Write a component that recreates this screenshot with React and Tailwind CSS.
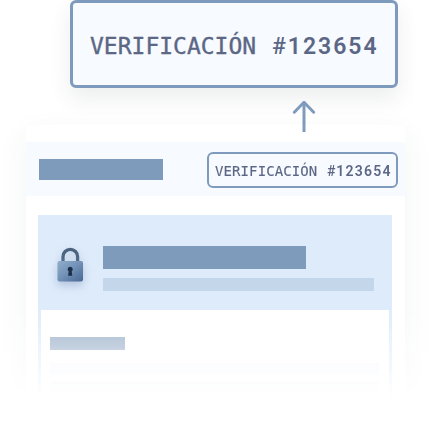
function Code({ large = false }) {
  return large ? (
    <span className="flex items-baseline whitespace-pre font-['DejaVu_Sans_Mono',monospace] text-[23px] leading-[30px] text-[#5c6785] [-webkit-text-stroke:0.35px_#5c6785]">
      VERIFICACIÓN{' '}
      <span className="ml-[2px] font-['Roboto',sans-serif] font-medium tracking-[1.9px] [-webkit-text-stroke:0px]">#</span>
      <span className="font-['Roboto',sans-serif] font-semibold tracking-[2px] [-webkit-text-stroke:0px]">123654</span>
    </span>
  ) : (
    <span className="flex items-baseline whitespace-pre font-['DejaVu_Sans_Mono',monospace] text-[14px] leading-5 tracking-[0.1px] text-[#5c6785] [-webkit-text-stroke:0.15px_#5c6785]">
      VERIFICACIÓN{' '}
      <span className="ml-[1px] font-['Roboto',sans-serif] font-medium tracking-[1px] [-webkit-text-stroke:0px]">#</span>
      <span className="font-['Roboto',sans-serif] font-semibold tracking-[1.25px] [-webkit-text-stroke:0px]">123654</span>
    </span>
  );
}

function Lock() {
  return (
    <svg width="34" height="42" viewBox="0 0 34 42" className="block overflow-visible drop-shadow-[0_4px_4px_rgba(70,95,140,0.28)]">
      <defs>
        <linearGradient id="body" x1="0" y1="0" x2="1" y2="1">
          <stop offset="0" stopColor="#91aecb" />
          <stop offset="0.5" stopColor="#7190b5" />
          <stop offset="1" stopColor="#476694" />
        </linearGradient>
        <linearGradient id="shackle" x1="0" y1="0" x2="0" y2="1">
          <stop offset="0" stopColor="#49627d" />
          <stop offset="1" stopColor="#526c8a" />
        </linearGradient>
      </defs>
      <path d="M6 18V12.7a7.3 7.3 0 0 1 14.6 0V18" fill="none" stroke="url(#shackle)" strokeWidth="3.3" />
      <rect x="0.5" y="17" width="25.5" height="20.5" rx="2" fill="url(#body)" />
      <path d="M13.2 22.8a2.6 2.6 0 0 1 1.5 4.7l.6 4.2h-4.2l.6-4.2a2.6 2.6 0 0 1 1.5-4.7z" fill="#1c2f48" />
    </svg>
  );
}

export default function App() {
  return (
    <div className="relative h-[443px] w-[433px] overflow-hidden bg-white">
      <div className="relative z-10 ml-[70px] flex h-[88px] w-[328px] items-center rounded-[6px] border-[3px] border-[#7e9bbd] bg-[#f7faff] pt-[4px] pl-[17px] shadow-[0_10px_22px_rgba(40,60,60,0.09)]">
        <Code large />
      </div>
      <div className="relative z-10 ml-[292px] pt-[12px]">
        <svg width="24" height="32" viewBox="0 0 24 32" fill="none" stroke="#7e9bbd" strokeWidth="3" strokeLinejoin="round" className="block">
          <path d="M12 32V2.5" />
          <path d="M2.3 12.2 12 2.3l9.7 9.9" strokeLinecap="round" />
        </svg>
      </div>
      <main className="-mt-[28px] h-[339px] pt-[21px] [mask-image:linear-gradient(#000_60%,transparent_87%)]">
        <div className="ml-[26px] h-[318px] w-[379px] bg-white pt-[17px] shadow-[0_10px_30px_rgba(40,65,60,0.06)]">
          <header className="flex h-[54px] items-center justify-between bg-[#f7faff] pr-[7px] pl-[12.5px]">
            <div className="h-[21px] w-[124px] bg-[#7f9bbb]" />
            <div className="mt-[2px] flex h-[36px] w-[191px] items-center rounded-[6px] border-2 border-[#7e9bbd] bg-[#f7faff] pt-[1px] pl-[6px]">
              <Code />
            </div>
          </header>
          <section className="mt-[19px] ml-[12px] h-[181px] w-[354px] border-x-[3px] border-[#deebfb]">
            <div className="-mx-[3px] flex h-[95px] bg-[#deebfb] pl-[19px]">
              <div className="pt-[29px]">
                <Lock />
              </div>
              <div className="ml-[11.5px] pt-[31px]">
                <div className="h-[23px] w-[203.5px] bg-[#7f9bbb]" />
                <div className="mt-[9px] h-[13px] w-[271.5px] bg-[#c4d6ea]" />
              </div>
            </div>
            <div className="pt-[27px] pl-[9px]">
              <div className="h-[13px] w-[75px] bg-[#97adc8]" />
              <div className="mt-[13px] h-[11px] w-[329px] bg-[#f6f8fc]" />
              <div className="mt-[7px] h-[11px] w-[329px] bg-[#f4f6f9]" />
            </div>
          </section>
        </div>
      </main>
    </div>
  );
}
